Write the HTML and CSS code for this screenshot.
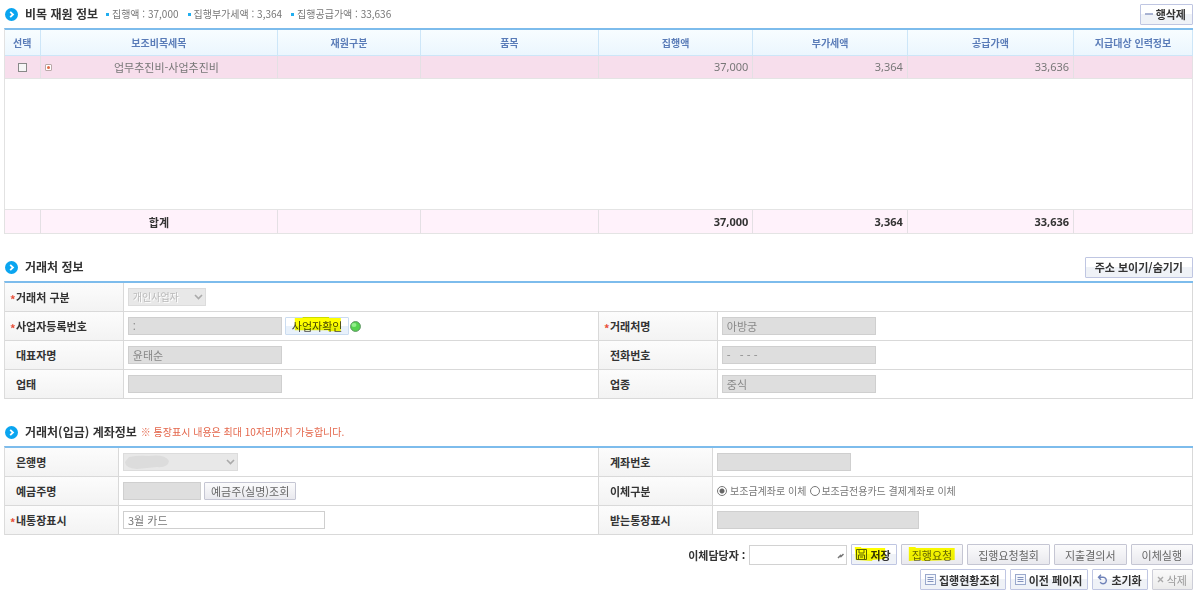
FILE: index.html
```html
<!DOCTYPE html>
<html lang="ko">
<head>
<meta charset="utf-8">
<title>비목 재원 정보</title>
<link rel="stylesheet" href="styles.css">
</head>
<body>
<svg class="defs" aria-hidden="true">
  <symbol id="bullet" viewBox="0 0 13 13"><circle cx="6.5" cy="6.5" r="6.5" fill="#0aa5f0"/><path d="M5.2 3.8 8 6.5 5.2 9.2" fill="none" stroke="#fff" stroke-width="1.8"/></symbol>
  <symbol id="chevron" viewBox="0 0 9 6"><path d="M1 1l3.500 3.500L8 1" fill="none" stroke="#aaa" stroke-width="1.600"/></symbol>
  <symbol id="list" viewBox="0 0 11 11"><rect x=".5" y=".5" width="10" height="10" fill="#f4f7fd" stroke="#9aa9cc"/><path d="M2.500 3.500h6M2.500 5.500h6M2.500 7.500h6" stroke="#8494bd" stroke-width="1"/></symbol>
</svg>
<main class="page">
  <section>
    <header class="bar">
      <svg class="bullet"><use href="#bullet"/></svg>
      <h2>비목 재원 정보</h2>
      <ul class="sums">
        <li>집행액 : 37,000</li>
        <li>집행부가세액 : 3,364</li>
        <li>집행공급가액 : 33,636</li>
      </ul>
      <button class="btn push" type="button"><svg class="minus" viewBox="0 0 8 2"><path d="M0 1h8" stroke="#8e9bc4" stroke-width="1.500"/></svg>행삭제</button>
    </header>
    <table class="grid">
      <colgroup><col class="c-pick"><col class="c-item"><col class="c-fund"><col class="c-goods"><col class="c-amt"><col class="c-vat"><col class="c-supply"><col class="c-person"></colgroup>
      <thead><tr><th>선택</th><th>보조비목세목</th><th>재원구분</th><th>품목</th><th>집행액</th><th>부가세액</th><th>공급가액</th><th>지급대상 인력정보</th></tr></thead>
      <tbody>
        <tr class="picked">
          <td><input class="tick" type="checkbox" aria-label="행 선택"></td>
          <td><div class="item"><button class="expand" type="button" aria-label="펼치기"></button><span>업무추진비-사업추진비</span></div></td>
          <td></td><td></td><td class="num">37,000</td><td class="num">3,364</td><td class="num">33,636</td><td></td>
        </tr>
        <tr class="blank"><td colspan="8"></td></tr>
      </tbody>
      <tfoot><tr><td></td><td>합계</td><td></td><td></td><td class="num">37,000</td><td class="num">3,364</td><td class="num">33,636</td><td></td></tr></tfoot>
    </table>
  </section>

  <section class="block">
    <header class="bar">
      <svg class="bullet"><use href="#bullet"/></svg>
      <h2>거래처 정보</h2>
      <button class="btn push" type="button">주소 보이기/숨기기</button>
    </header>
    <table class="form vendor">
      <colgroup><col class="label"><col class="value"><col class="label"><col class="value-end"></colgroup>
      <tr><th class="req"><label for="kind">거래처 구분</label></th><td colspan="3"><div class="pick w-kind"><select id="kind" disabled><option>개인사업자</option></select><svg class="chev"><use href="#chevron"/></svg></div></td></tr>
      <tr><th class="req"><label for="bizno">사업자등록번호</label></th><td><div class="line"><input id="bizno" class="w-mid" value=":" disabled><button class="btn small sky" type="button">사업자확인<svg class="marker" viewBox="0 0 64 17" preserveAspectRatio="none"><path d="M9 0 17 0 17-1 44-1 44 0 56 0 56 14 43 14 43 13 9 13Z" fill="#ff0"/></svg></button><svg class="lamp" viewBox="0 0 11 11"><circle cx="5.500" cy="5.500" r="4.900" fill="#55d34f" stroke="#5c9162"/><ellipse cx="4" cy="4" rx="2.500" ry="2" fill="#93ef8d"/></svg></div></td>
        <th class="req"><label for="vname">거래처명</label></th><td><input id="vname" class="w-mid" value="아방궁" disabled></td></tr>
      <tr><th><label for="ceo">대표자명</label></th><td><input id="ceo" class="w-mid" value="윤태순" disabled></td><th><label for="tel">전화번호</label></th><td><input id="tel" class="w-mid" value="-   - - -" disabled></td></tr>
      <tr><th><label for="btype">업태</label></th><td><input id="btype" class="w-mid" disabled></td><th><label for="bitem">업종</label></th><td><input id="bitem" class="w-mid" value="중식" disabled></td></tr>
    </table>
  </section>

  <section class="block">
    <header class="bar">
      <svg class="bullet"><use href="#bullet"/></svg>
      <h2>거래처(입금) 계좌정보</h2>
      <p class="note">※ 통장표시 내용은 최대 10자리까지 가능합니다.</p>
    </header>
    <table class="form account">
      <colgroup><col class="label"><col class="value"><col class="label"><col class="value-end"></colgroup>
      <tr><th><label for="bank">은행명</label></th><td><div class="pick w-bank"><select id="bank" disabled><option></option></select><svg class="smudge" viewBox="0 0 44 14"><path d="M4 2Q14 0 24 1 40-1 44 6 43 13 32 12L12 14Q0 13 0 7Z" fill="#dcdcdc"/></svg><svg class="chev"><use href="#chevron"/></svg></div></td>
        <th><label for="acct">계좌번호</label></th><td><input id="acct" class="w-acct" disabled></td></tr>
      <tr><th><label for="owner">예금주명</label></th><td><div class="line"><input id="owner" class="w-owner" disabled><button class="btn small mute" type="button">예금주(실명)조회</button></div></td>
        <th>이체구분</th><td><div class="radios"><label><input type="radio" name="route" checked><span>보조금계좌로 이체</span></label><label class="tight"><input type="radio" name="route"><span>보조금전용카드 결제계좌로 이체</span></label></div></td></tr>
      <tr><th class="req"><label for="mine">내통장표시</label></th><td><input id="mine" class="w-wide" value="3월 카드"></td><th><label for="theirs">받는통장표시</label></th><td><input id="theirs" class="w-wide" disabled></td></tr>
    </table>
  </section>

  <footer class="actions">
    <div class="row">
      <label class="who" for="who">이체담당자 :</label>
      <div class="pick w-who"><select id="who"><option></option></select><svg class="chev pen" viewBox="0 0 9 6"><path d="M2 5 4.500 2.500 5 3.500 7.500 1" fill="none" stroke="#777" stroke-width="1.500"/></svg></div>
      <button class="btn snug" type="button"><svg class="disk" viewBox="0 0 11 11"><path d="M.5.5h10v10H.5zM3 .5v3.500h5V.5M2.500 10.500V6h6v4.500M4 8h3" fill="none" stroke="#5d6480"/></svg>저장<svg class="marker" viewBox="0 0 47 19" preserveAspectRatio="none"><path d="M3 2 10 2 10 3 36 3 36 14 22 15 22 16 4 15Z" fill="#ff0"/></svg></button>
      <button class="btn mute" type="button">집행요청<svg class="marker" viewBox="0 0 62 19" preserveAspectRatio="none"><path d="M7 2 14 2 14 3 54 3 54 15 20 16 20 15 7 16Z" fill="#ff0"/></svg></button>
      <button class="btn mute" type="button">집행요청철회</button>
      <button class="btn mute" type="button">지출결의서</button>
      <button class="btn mute" type="button">이체실행</button>
    </div>
    <div class="row">
      <button class="btn snug" type="button"><svg class="ico"><use href="#list"/></svg>집행현황조회</button>
      <button class="btn snug" type="button"><svg class="ico"><use href="#list"/></svg>이전 페이지</button>
      <button class="btn snug" type="button"><svg class="ico" viewBox="0 0 11 11"><path d="M1.500 3.200h4.600a3.300 3.300 0 1 1-2.900 5M4 .7 1.500 3.200 4 5.700" fill="none" stroke="#6f82b8" stroke-width="1.400"/></svg>초기화</button>
      <button class="btn snug off" type="button" disabled><svg class="cross" viewBox="0 0 7 7"><path d="M1 1l5 5M6 1 1 6" stroke="#aaa" stroke-width="1.400"/></svg>삭제</button>
    </div>
  </footer>
</main>
</body>
</html>
```
FILE: styles.css
```css
* { box-sizing: border-box; }

body {
  margin: 0;
  background: #fff;
  color: #777;
  font: 11px/16px "Noto Sans CJK KR", "Noto Sans", sans-serif;
}

button, input, select { font: inherit; color: inherit; margin: 0; }
svg { display: block; flex: none; }
.defs { position: absolute; width: 0; height: 0; }

.page { padding: 0 7px 0 4px; }
.block { margin-top: 19px; }

/* Section headings */
.bar { display: flex; align-items: center; height: 28px; padding-left: 1px; }
.bullet { width: 13px; height: 13px; }
.bar h2 { margin: 0 0 0 7px; font-size: 12px; line-height: 16px; color: #333; }
.sums { display: flex; gap: 9px; margin: 0 0 0 8px; padding: 0; list-style: none; font-size: 10px; }
.sums li { display: flex; align-items: center; gap: 3px; }
.sums li::before { content: ""; width: 3px; height: 3px; background: #20aef0; }
.note { margin: 0 0 0 4px; font-size: 10px; color: #e4674c; }
.push { margin-left: auto; }

/* Buttons */
.btn {
  position: relative;
  display: inline-flex;
  align-items: center;
  justify-content: center;
  gap: 3px;
  height: 21px;
  padding: 0 9px;
  border: 1px solid #bfc6e2;
  border-radius: 1px;
  background: linear-gradient(#fff 0 50%, #eff2f7 50%);
  color: #333;
  font-weight: bold;
  line-height: 16px;
  white-space: nowrap;
}
.bar .btn:has(.minus) { padding: 0 6px 0 4px; }
.mute { padding: 0 10px; background: linear-gradient(#fbfbfc, #e9e9ee); border-color: #c5c6d3; color: #666; font-weight: normal; }
.snug { padding: 0 5px 0 4px; }
.off { background: linear-gradient(#fafafa, #ebebeb); border-color: #cdced8; color: #999; font-weight: normal; }
.small { height: 18px; padding: 0 6px; }
.sky { border-color: #cbdcf0; background: linear-gradient(#fff 0 50%, #e8f1fb 50%); color: #444; font-weight: normal; }
.marker { position: absolute; inset: 0; width: 100%; height: 100%; overflow: visible; mix-blend-mode: multiply; }
.minus { width: 8px; height: 2px; }
.ico, .disk { width: 11px; height: 11px; }
.cross { width: 7px; height: 7px; }

/* Budget grid */
table { width: 100%; border-collapse: separate; border-spacing: 0; table-layout: fixed; }
th, td { padding: 0; }
.grid { border-top: 2px solid #7dbcec; border-left: 1px solid #e2e2e2; }
.c-pick { width: 3%; }
.c-item { width: 20%; }
.c-fund { width: 12%; }
.c-goods { width: 15%; }
.c-amt, .c-vat { width: 13%; }
.c-supply { width: 14%; }
.c-person { width: 10%; }
.grid th {
  height: 26px;
  border-right: 1px solid #cde6f8;
  border-bottom: 1px solid #cde6f8;
  background: linear-gradient(#f8fdff, #ebf6fe);
  color: #5a7cb8;
  font-size: 10px;
  font-weight: bold;
}
.grid td { border-right: 1px solid #e4e0e4; border-bottom: 1px solid #e4e4e4; text-align: center; }
.picked td { height: 23px; background: #f7deec; }
.blank td { height: 131px; }
.grid tfoot td { height: 24px; background: #fff2fb; color: #333; font-weight: bold; }
.grid td.num { padding-right: 4px; text-align: right; font-family: "Noto Sans", "Noto Sans CJK KR", sans-serif; }
.item { display: flex; align-items: center; gap: 4px; padding-left: 4px; }
.item span { flex: 1; }
.tick { display: block; appearance: none; width: 9px; height: 9px; margin: 0 auto; border: 1px solid #888; background: #f6f6f6; }
.expand { display: grid; place-items: center; width: 7px; height: 7px; padding: 0; border: 1px solid #b9a9a9; border-radius: 1px; background: #fff; }
.expand::before { content: ""; width: 3px; height: 3px; border-radius: 50%; background: #df6b45; }

/* Detail forms */
.form { border-top: 2px solid #7dbcec; border-left: 1px solid #dcdcdc; }
.form th, .form td { height: 29px; border-right: 1px solid #d9d9d9; border-bottom: 1px solid #d9d9d9; }
.form th { position: relative; padding-left: 11px; background: linear-gradient(#fcfcfc, #f3f3f3); color: #333; text-align: left; }
.form td { padding-left: 4px; }
.form .req::before { content: "*"; position: absolute; left: 5px; top: 8px; color: #e8503a; }
.label { width: 10%; }
.value { width: 40%; }
.account .label { width: 114px; }
.account .value { width: 480px; }
.line { display: flex; align-items: center; gap: 3px; }
.line .sky + .lamp { margin-left: -2px; }
.lamp { width: 11px; height: 11px; }

.form input:not([type]) { display: block; height: 18px; padding: 0 4px; border: 1px solid #cfcfcf; border-radius: 0; background: #fff; color: #777; }
.form input:not([type]):disabled { background: #dedede; color: #888; }
.form .w-mid { width: 154px; }
.form .w-acct { width: 134px; }
.form .w-owner { width: 78px; }
.form .w-wide { width: 202px; }

.pick { position: relative; }
.pick select { display: block; appearance: none; width: 100%; height: 18px; padding: 0 4px; border: 1px solid #d2d2d2; border-radius: 0; background: #fff; }
.pick select:disabled { border-color: #dcdcdc; background: #e8e8e8; color: #bbb; font-size: 10px; opacity: 1; text-shadow: 1px 1px #fff; }
.chev { position: absolute; right: 3px; top: 6px; width: 9px; height: 6px; pointer-events: none; }
.smudge { position: absolute; left: 2px; top: 2px; width: 44px; height: 14px; pointer-events: none; }
.w-kind { width: 78px; }
.w-bank { width: 115px; }
.w-who { width: 98px; }
.w-who select { height: 20px; }
.w-who .chev { top: 8px; right: 2px; }

.radios { display: flex; align-items: center; gap: 4px; font-size: 10px; }
.radios label { display: flex; align-items: center; gap: 3px; }
.radios .tight { gap: 1px; }
.radios input { appearance: none; width: 10px; height: 10px; border: 1px solid #777; border-radius: 50%; background: #fff; }
.radios input:checked { background: radial-gradient(circle, #666 0 2px, #fff 3px); }

/* Action buttons */
.actions { display: flex; flex-direction: column; gap: 4px; margin-top: 9px; }
.row { display: flex; align-items: center; justify-content: flex-end; gap: 4px; }
.who { color: #333; font-weight: bold; }
```
